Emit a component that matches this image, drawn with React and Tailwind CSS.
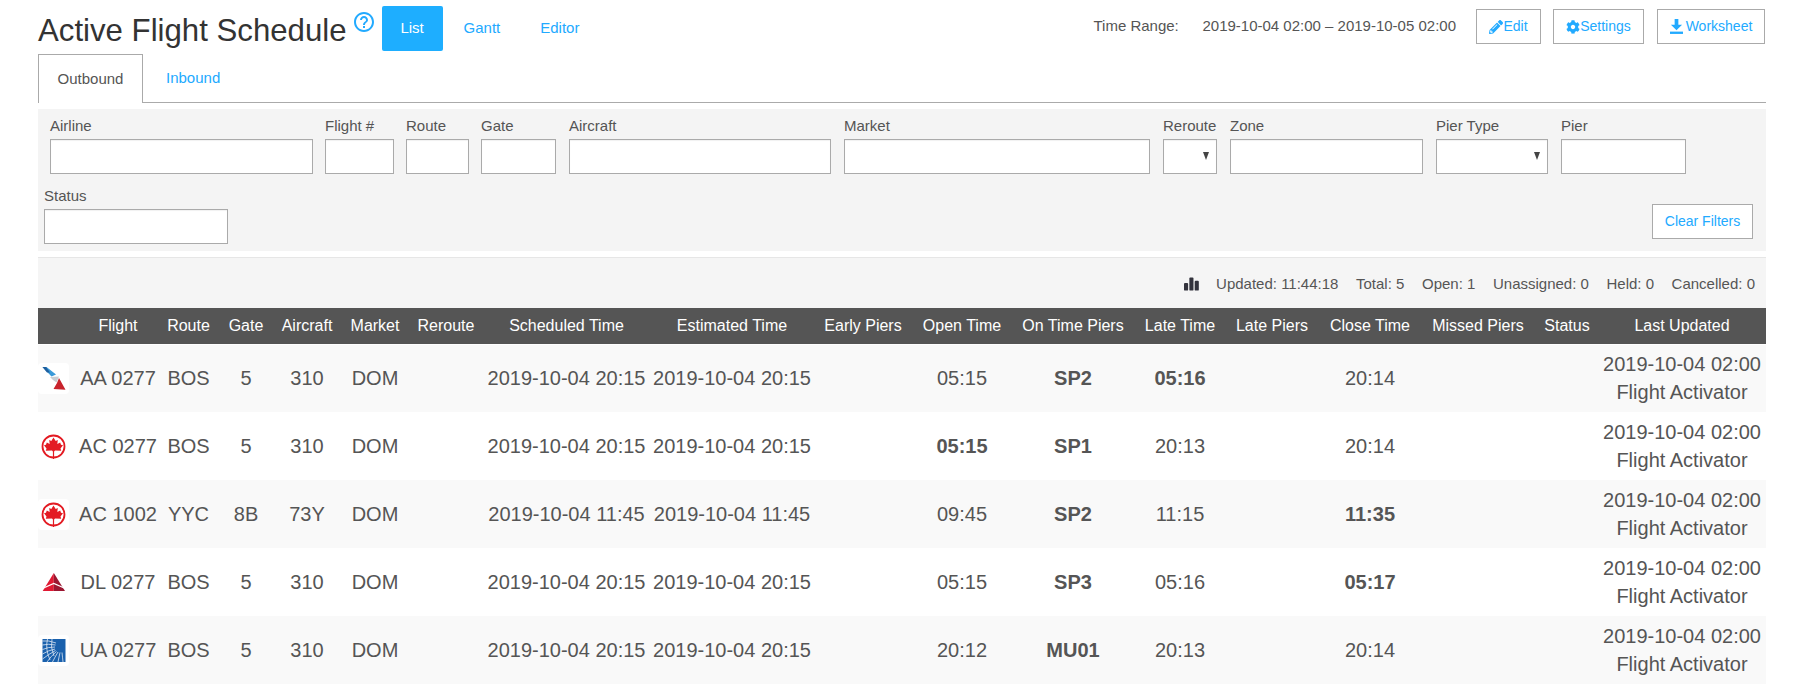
import { FaPencilAlt, FaCog } from 'react-icons/fa';
import { MdHelpOutline } from 'react-icons/md';

const columns = [
  { label: '', width: 'w-[38px]' },
  { label: 'Flight', width: 'w-[84px]' },
  { label: 'Route', width: 'w-[57px]' },
  { label: 'Gate', width: 'w-[58px]' },
  { label: 'Aircraft', width: 'w-[64px]' },
  { label: 'Market', width: 'w-[72px]' },
  { label: 'Reroute', width: 'w-[70px]' },
  { label: 'Scheduled Time', width: 'w-[171px]' },
  { label: 'Estimated Time', width: 'w-[160px]' },
  { label: 'Early Piers', width: 'w-[102px]' },
  { label: 'Open Time', width: 'w-[96px]' },
  { label: 'On Time Piers', width: 'w-[126px]' },
  { label: 'Late Time', width: 'w-[88px]' },
  { label: 'Late Piers', width: 'w-[96px]' },
  { label: 'Close Time', width: 'w-[100px]' },
  { label: 'Missed Piers', width: 'w-[116px]' },
  { label: 'Status', width: 'w-[62px]' },
  { label: 'Last Updated', width: 'w-[168px]' },
];

const flights = [
  { logo: 'aa', flight: 'AA 0277', route: 'BOS', gate: '5', aircraft: '310', sched: '2019-10-04 20:15', open: '05:15', piers: 'SP2', late: '05:16', close: '20:14', bold: 'late' },
  { logo: 'ac', flight: 'AC 0277', route: 'BOS', gate: '5', aircraft: '310', sched: '2019-10-04 20:15', open: '05:15', piers: 'SP1', late: '20:13', close: '20:14', bold: 'open' },
  { logo: 'ac', flight: 'AC 1002', route: 'YYC', gate: '8B', aircraft: '73Y', sched: '2019-10-04 11:45', open: '09:45', piers: 'SP2', late: '11:15', close: '11:35', bold: 'close' },
  { logo: 'dl', flight: 'DL 0277', route: 'BOS', gate: '5', aircraft: '310', sched: '2019-10-04 20:15', open: '05:15', piers: 'SP3', late: '05:16', close: '05:17', bold: 'close' },
  { logo: 'ua', flight: 'UA 0277', route: 'BOS', gate: '5', aircraft: '310', sched: '2019-10-04 20:15', open: '20:12', piers: 'MU01', late: '20:13', close: '20:14', bold: '' },
];

const filters = [
  { label: 'Airline', width: 'w-[263px]' },
  { label: 'Flight #', width: 'w-[69px]' },
  { label: 'Route', width: 'w-[63px]' },
  { label: 'Gate', width: 'w-[75px]' },
  { label: 'Aircraft', width: 'ml-px w-[262px]' },
  { label: 'Market', width: 'ml-px w-[306px]' },
  { label: 'Reroute', width: 'ml-px w-[54px]', select: true },
  { label: 'Zone', width: 'ml-px w-[193px]' },
  { label: 'Pier Type', width: 'ml-px w-[112px]', select: true },
  { label: 'Pier', width: 'ml-px w-[125px]' },
];

const stats = [
  ['Updated', '11:44:18'],
  ['Total', '5'],
  ['Open', '1'],
  ['Unassigned', '0'],
  ['Held', '0'],
  ['Cancelled', '0'],
];

function AirlineLogo({ code }) {
  return (
    <svg viewBox="0 0 31 31" className="h-[31px] w-[31px] rounded-[4px] bg-white">
      {code === 'aa' && (
        <>
          <polygon points="4.5,4 8.5,4 18,11.5 13.5,13.5" fill="#3a9ad9" />
          <polygon points="4.5,4 8,4 12,9.5 9,9.5" fill="#1f5f9e" />
          <polygon points="12,14 21,13.5 18.5,19.5 15,17" fill="#c9ced3" />
          <polygon points="21,15 27.5,26.8 15.5,26 19,20" fill="#c8232c" />
        </>
      )}
      {code === 'ac' && (
        <>
          <circle cx="15.5" cy="15.5" r="11" fill="none" stroke="#e31b23" strokeWidth="1.8" />
          <polygon
            points="15.5,6.5 17.7,10 19.8,9 19.3,13 22.2,11.5 23,13.7 25,14.2 22.5,17.5 23.2,19.7 17,19.5 16.1,20.5 16.1,28 14.9,28 14.9,20.5 14,19.5 7.8,19.7 8.5,17.5 6,14.2 8,13.7 8.8,11.5 11.7,13 11.2,9 13.3,10"
            fill="#e31b23"
          />
        </>
      )}
      {code === 'dl' && (
        <>
          <polygon points="15.8,6 15.8,24 4.7,24" fill="#e01933" />
          <polygon points="15.8,6 15.8,24 27,24" fill="#9b1631" />
          <polyline points="5.5,21 15.8,16.5 26.2,21" fill="none" stroke="#ffffff" strokeWidth="1.3" />
        </>
      )}
      {code === 'ua' && (
        <>
          <rect x="4.5" y="4" width="23" height="23" fill="#1b62ad" />
          <g fill="none" stroke="#ffffff" strokeWidth="0.8" opacity="0.85">
            <path d="M18 8 Q10 5 4.5 6" />
            <path d="M17.5 10 Q10 8.5 4.5 10" />
            <path d="M17 12 Q10 12 4.5 14.5" />
            <path d="M17 14 Q10 15.5 4.5 19" />
            <path d="M17.5 15.5 Q11 19 4.5 24" />
            <path d="M18.5 16.5 Q13 21 9 27" />
            <path d="M20 17 Q17 22 14.5 27" />
            <path d="M22 17.5 Q21 22 20 27" />
            <path d="M24 17.5 Q24.5 22 25 27" />
            <path d="M14 4 Q12 12 16 21" />
            <path d="M9.5 4 Q7 14 12 25" />
          </g>
        </>
      )}
    </svg>
  );
}

function FilterField({ label, width, select }) {
  return (
    <div className={width}>
      <div className="h-[22px] text-[15px] leading-[18px] text-[#555]">{label}</div>
      <div className="relative h-[35px] border border-[#aaa] bg-white shadow-[inset_0_1px_1px_rgba(0,0,0,0.06)]">
        {select && (
          <span className="absolute right-[7px] top-[12px] h-0 w-0 border-x-[3.5px] border-t-[8px] border-x-transparent border-t-[#444]" />
        )}
      </div>
    </div>
  );
}

function OutlineButton({ icon, children, className }) {
  return (
    <button className={`flex h-[35px] items-center justify-center border border-[#aaa] bg-white text-[14px] text-[#22aaff] ${className}`}>
      {icon}
      {children}
    </button>
  );
}

export default function App() {
  return (
    <div className="bg-white pb-[2px] pl-[38px] pr-[34px] font-['Liberation_Sans',Arial,sans-serif] text-[#555]">
      {/* Title row */}
      <div className="flex h-[54px] items-start">
        <h1 className="mt-[13px] text-[31.2px] font-normal leading-[36px] text-[#333]">Active Flight Schedule</h1>
        <MdHelpOutline className="ml-[5px] mt-[10px] text-[#22aaff]" size={24} />
        <a className="ml-[6px] mt-[6px] flex h-[45px] w-[61px] items-center justify-center rounded-[2px] bg-[#1eaeff] text-[15px] text-white">List</a>
        <a className="ml-px mt-[6px] flex h-[45px] items-center px-[20px] text-[15px] text-[#22aaff]">Gantt</a>
        <a className="mt-[6px] flex h-[45px] items-center px-[20px] text-[15px] text-[#22aaff]">Editor</a>
        <div className="ml-auto mr-px mt-[9px] flex items-center">
          <span className="w-[109px] text-[15px]">Time Range:</span>
          <span className="mr-[20px] text-[15px]">2019-10-04 02:00 – 2019-10-05 02:00</span>
          <OutlineButton className="w-[65px]" icon={<FaPencilAlt size={14} />}>Edit</OutlineButton>
          <OutlineButton className="ml-[12px] w-[91px]" icon={<FaCog size={14} />}>Settings</OutlineButton>
          <OutlineButton
            className="ml-[13px] w-[108px]"
            icon={
              <svg viewBox="0 0 14 16" className="mr-[3px] h-[15px] w-[13px]" fill="currentColor">
                <polygon points="5,0 9,0 9,6 13,6 7,12 1,6 5,6" />
                <rect x="0" y="13.5" width="14" height="2.5" />
              </svg>
            }
          >
            Worksheet
          </OutlineButton>
        </div>
      </div>

      {/* Tabs */}
      <div className="flex h-[49px] border-b border-[#aaa]">
        <div className="flex h-[49px] w-[105px] items-center justify-center border-x border-t border-[#aaa] bg-white pt-[1px] text-[15px]">Outbound</div>
        <div className="flex items-center px-[23px] text-[15px] text-[#22aaff]">Inbound</div>
      </div>

      {/* Filters */}
      <div className="mt-[6px] h-[142px] bg-[#f4f4f4] pt-[8px]">
        <div className="flex gap-3 pl-3">
          {filters.map(filter => (
            <FilterField key={filter.label} {...filter} />
          ))}
        </div>
        <div className="mt-[13px] flex items-end justify-between pl-[6px] pr-[13px]">
          <FilterField label="Status" width="w-[184px]" />
          <OutlineButton className="mb-[5px] w-[101px]">Clear Filters</OutlineButton>
        </div>
      </div>

      {/* Stats */}
      <div className="mt-[6px] flex h-[51px] items-center justify-end gap-[17.6px] border-t border-[#e6e6e6] bg-[#f5f5f5] pr-[11px] pt-[2px] text-[15px]">
        <svg viewBox="0 0 16 14" className="mr-[-1px] h-[14px] w-[15px]" fill="#33333d">
          <rect x="0" y="6" width="4.4" height="8" rx="1" />
          <rect x="5.7" y="0" width="4.4" height="14" rx="1" />
          <rect x="11.4" y="3.5" width="4.4" height="10.5" rx="1" />
        </svg>
        {stats.map(([label, value]) => (
          <span key={label}>{label}: {value}</span>
        ))}
      </div>

      {/* Flights */}
      <table className="w-full table-fixed">
        <colgroup>
          {columns.map((col, i) => (
            <col key={i} className={col.width} />
          ))}
        </colgroup>
        <thead>
          <tr className="h-[36px] border-b border-white bg-[#555] text-[16px] text-white">
            {columns.map((col, i) => (
              <th key={i} className="whitespace-nowrap p-0 font-normal">{col.label}</th>
            ))}
          </tr>
        </thead>
        <tbody>
          {flights.map((row, i) => (
            <tr key={i} className="h-[68px] text-center text-[20px] leading-[28px] odd:bg-[#f9f9f9]">
              <td className="p-0"><AirlineLogo code={row.logo} /></td>
              <td className="whitespace-nowrap p-0">{row.flight}</td>
              <td className="p-0">{row.route}</td>
              <td className="p-0">{row.gate}</td>
              <td className="p-0">{row.aircraft}</td>
              <td className="p-0">DOM</td>
              <td className="p-0"></td>
              <td className="whitespace-nowrap p-0">{row.sched}</td>
              <td className="whitespace-nowrap p-0">{row.sched}</td>
              <td className="p-0"></td>
              <td className={row.bold === 'open' ? 'p-0 font-bold' : 'p-0'}>{row.open}</td>
              <td className="p-0 font-bold">{row.piers}</td>
              <td className={row.bold === 'late' ? 'p-0 font-bold' : 'p-0'}>{row.late}</td>
              <td className="p-0"></td>
              <td className={row.bold === 'close' ? 'p-0 font-bold' : 'p-0'}>{row.close}</td>
              <td className="p-0"></td>
              <td className="p-0"></td>
              <td className="whitespace-nowrap p-0">2019-10-04 02:00<br />Flight Activator</td>
            </tr>
          ))}
        </tbody>
      </table>
    </div>
  );
}
